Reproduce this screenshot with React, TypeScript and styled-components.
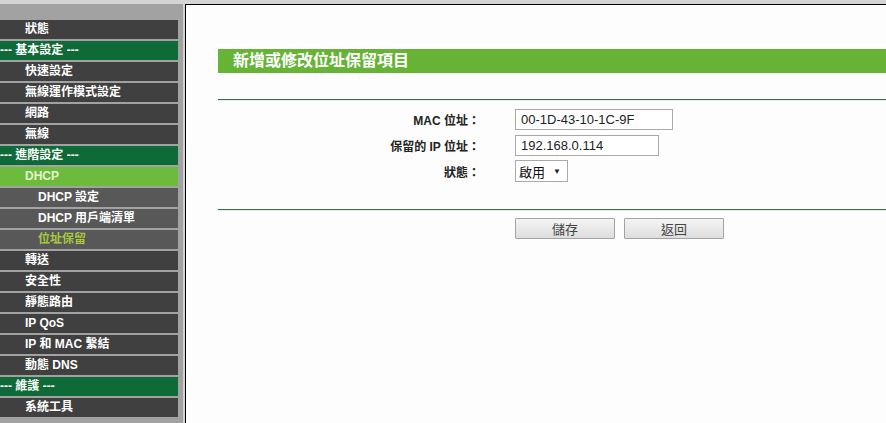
import React from "react";
import styled, { createGlobalStyle, css } from "styled-components";

const GlobalStyle = createGlobalStyle`
  html, body {
    margin: 0;
    padding: 0;
    background: #d4d4d4;
    font-family: "Liberation Sans", "Noto Sans CJK TC", sans-serif;
  }
  #root { height: 423px; overflow: hidden; }
`;

const Page = styled.div`
  display: flex;
  height: 423px;
  padding-top: 4px;
  box-sizing: border-box;
  overflow: hidden;
`;

const Sidebar = styled.nav`
  flex: 0 0 185px;
  box-sizing: border-box;
  background: #a2a2a2;
  padding: 16px 5px 0 0;
  border-right: 2px solid #d2d2d2;
  display: flex;
  flex-direction: column;
  gap: 2px;
`;

type Variant = "item" | "section" | "parent" | "sub" | "current";

const MenuRow = styled.div<{ $variant: Variant }>`
  flex: 0 0 19px;
  height: 19px;
  line-height: 19px;
  font-size: 12px;
  font-weight: bold;
  white-space: nowrap;
  overflow: hidden;
  color: #ffffff;
  background: #404040;
  padding-left: 25px;
  ${(p) =>
    p.$variant === "section" &&
    css`
      background: #0e6a36;
      padding-left: 0;
    `}
  ${(p) =>
    p.$variant === "parent" &&
    css`
      background: #6cbb3c;
      color: #e4f4d2;
    `}
  ${(p) =>
    (p.$variant === "sub" || p.$variant === "current") &&
    css`
      background: #585858;
      padding-left: 38px;
    `}
  ${(p) =>
    p.$variant === "current" &&
    css`
      color: #a9c83c;
    `}
`;

const Main = styled.main`
  flex: 1;
  min-width: 0;
  background: #fcfdfc;
  border-top: 1px solid #000;
  border-left: 1px solid #000;
  padding: 44px 0 0 32px;
  display: flex;
  flex-direction: column;
`;

const TitleBar = styled.h1`
  margin: 0;
  height: 24px;
  line-height: 24px;
  background: #66b336;
  color: #ffffff;
  font-size: 16px;
  font-weight: bold;
  padding-left: 15px;
  white-space: nowrap;
`;

const Divider = styled.hr<{ $top: number }>`
  margin: ${(p) => p.$top}px 0 0 0;
  border: 0;
  height: 1px;
  background: #3b6d4e;
  box-shadow: 0 1px 0 #e2efe2;
`;

const FormGrid = styled.div`
  margin-top: 6px;
  display: grid;
  grid-template-columns: 262px auto;
  column-gap: 35px;
  grid-auto-rows: 26px;
  align-items: center;
`;

const Label = styled.label`
  text-align: right;
  font-size: 12px;
  font-weight: bold;
  color: #222;
  white-space: nowrap;
`;

const TextInput = styled.input<{ $w: number }>`
  box-sizing: border-box;
  width: ${(p) => p.$w}px;
  height: 21px;
  border: 1px solid #a9a9a9;
  background: #fff;
  padding: 0 0 0 5px;
  font-family: "Liberation Sans", "Noto Sans CJK TC", sans-serif;
  font-size: 13px;
  color: #222;
  outline: none;
`;

const SelectBox = styled.div`
  box-sizing: border-box;
  width: 53px;
  height: 22px;
  border: 1px solid #a9a9a9;
  background: #fff;
  display: flex;
  align-items: center;
  justify-content: space-between;
  padding: 0 6px 0 3px;
  font-size: 13px;
  color: #111;
`;

const Arrow = styled.span`
  font-size: 8px;
  color: #222;
`;

const ButtonRow = styled.div`
  margin-top: 8px;
  padding-left: 297px;
  display: flex;
  gap: 9px;
`;

const Button = styled.button`
  box-sizing: border-box;
  width: 100px;
  height: 21px;
  border: 1px solid #a3a3a3;
  border-radius: 1px;
  background: linear-gradient(#f4f4f4, #dedede);
  font-family: "Liberation Sans", "Noto Sans CJK TC", sans-serif;
  font-size: 13px;
  color: #444;
  padding: 0;
  cursor: pointer;
`;

const menu: { label: string; variant: Variant }[] = [
  { label: "狀態", variant: "item" },
  { label: "--- 基本設定 ---", variant: "section" },
  { label: "快速設定", variant: "item" },
  { label: "無線運作模式設定", variant: "item" },
  { label: "網路", variant: "item" },
  { label: "無線", variant: "item" },
  { label: "--- 進階設定 ---", variant: "section" },
  { label: "DHCP", variant: "parent" },
  { label: "DHCP 設定", variant: "sub" },
  { label: "DHCP 用戶端清單", variant: "sub" },
  { label: "位址保留", variant: "current" },
  { label: "轉送", variant: "item" },
  { label: "安全性", variant: "item" },
  { label: "靜態路由", variant: "item" },
  { label: "IP QoS", variant: "item" },
  { label: "IP 和 MAC 繫結", variant: "item" },
  { label: "動態 DNS", variant: "item" },
  { label: "--- 維護 ---", variant: "section" },
  { label: "系統工具", variant: "item" },
];

export default function App() {
  return (
    <>
      <GlobalStyle />
      <Page>
        <Sidebar>
          {menu.map((m) => (
            <MenuRow key={m.label} $variant={m.variant}>
              {m.label}
            </MenuRow>
          ))}
        </Sidebar>
        <Main>
          <TitleBar>新增或修改位址保留項目</TitleBar>
          <Divider $top={26} />
          <FormGrid>
            <Label>MAC 位址：</Label>
            <TextInput $w={158} defaultValue="00-1D-43-10-1C-9F" />
            <Label>保留的 IP 位址：</Label>
            <TextInput $w={144} defaultValue="192.168.0.114" />
            <Label>狀態：</Label>
            <SelectBox>
              啟用 <Arrow>▼</Arrow>
            </SelectBox>
          </FormGrid>
          <Divider $top={25} />
          <ButtonRow>
            <Button>儲存</Button>
            <Button>返回</Button>
          </ButtonRow>
        </Main>
      </Page>
    </>
  );
}
